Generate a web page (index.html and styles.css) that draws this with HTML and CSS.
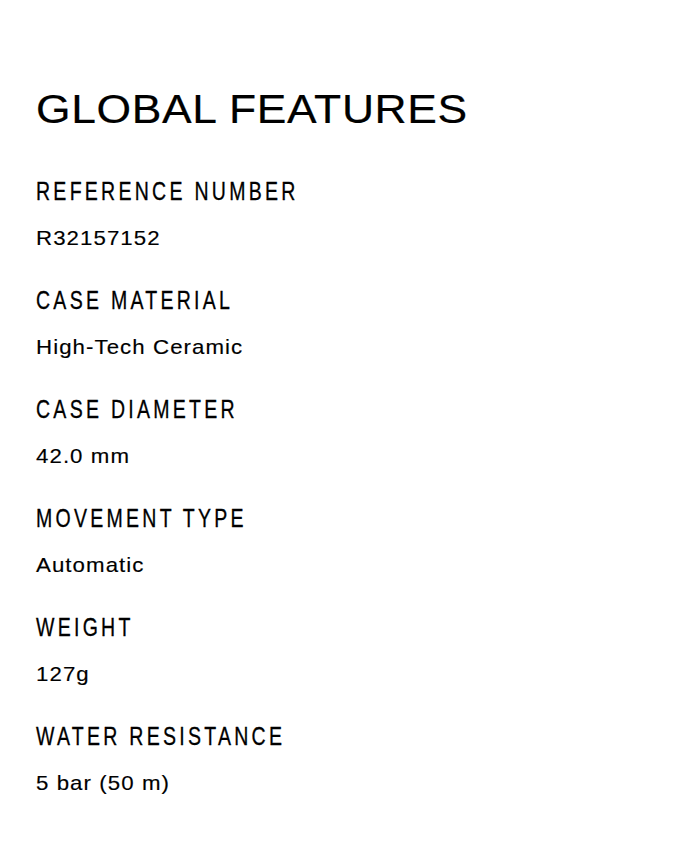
FILE: index.html
```html
<!DOCTYPE html>
<html lang="en">
<head>
<meta charset="utf-8">
<title>Global Features</title>
<link rel="stylesheet" href="styles.css">
</head>
<body>
<main class="features">
  <h1 class="features-title">GLOBAL FEATURES</h1>
  <dl class="features-list">
    <div class="feature">
      <dt class="feature-label">REFERENCE NUMBER</dt>
      <dd class="feature-value">R32157152</dd>
    </div>
    <div class="feature">
      <dt class="feature-label">CASE MATERIAL</dt>
      <dd class="feature-value">High-Tech Ceramic</dd>
    </div>
    <div class="feature">
      <dt class="feature-label">CASE DIAMETER</dt>
      <dd class="feature-value">42.0 mm</dd>
    </div>
    <div class="feature">
      <dt class="feature-label">MOVEMENT TYPE</dt>
      <dd class="feature-value">Automatic</dd>
    </div>
    <div class="feature">
      <dt class="feature-label">WEIGHT</dt>
      <dd class="feature-value">127g</dd>
    </div>
    <div class="feature">
      <dt class="feature-label">WATER RESISTANCE</dt>
      <dd class="feature-value">5 bar (50 m)</dd>
    </div>
  </dl>
</main>
</body>
</html>
```

FILE: styles.css
```css
html, body {
  margin: 0;
  padding: 0;
  background: #ffffff;
}

body {
  color: #000000;
  font-family: "Liberation Sans", Arial, sans-serif;
}

.features {
  padding: 87px 36px 0 36px;
}

.features-title {
  width: max-content;
  margin: 0;
  font-size: 40px;
  font-weight: 400;
  line-height: 44px;
  letter-spacing: 0.6px;
  transform: scaleX(1.11);
  transform-origin: left center;
  -webkit-text-stroke: 0.2px #000;
}

.features-list {
  margin: 46px 0 0 0;
  display: flex;
  flex-direction: column;
  gap: 36px;
}

.feature {
  display: flex;
  flex-direction: column;
  gap: 21px;
}

.feature-label {
  width: max-content;
  font-size: 25px;
  line-height: 28px;
  letter-spacing: 4.2px;
  transform: scaleX(0.78);
  transform-origin: left center;
  -webkit-text-stroke: 0.3px #000;
}

.feature-value {
  width: max-content;
  margin: 0;
  font-size: 21px;
  line-height: 24px;
  letter-spacing: 1px;
  transform: scaleX(1.06);
  transform-origin: left center;
  -webkit-text-stroke: 0.15px #000;
}
```
